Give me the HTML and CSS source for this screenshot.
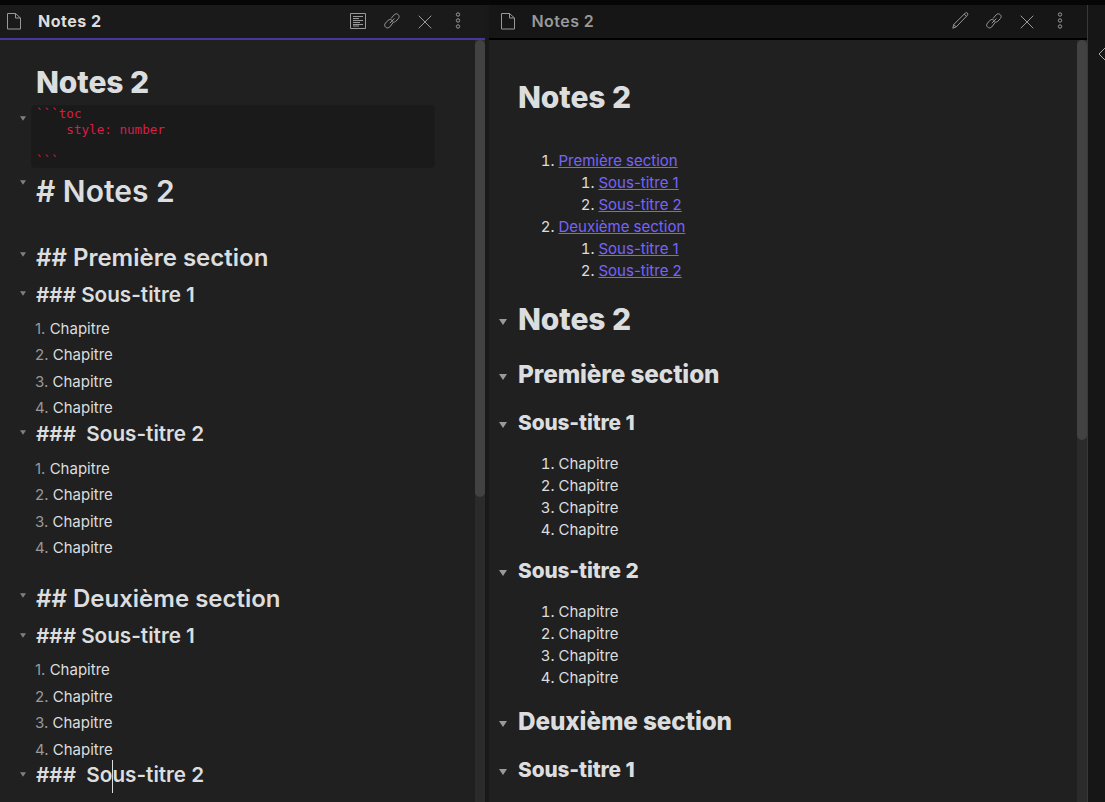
FILE: index.html
```html
<!DOCTYPE html>
<html lang="fr">
<head>
<meta charset="utf-8">
<title>Notes 2</title>
<link rel="stylesheet" href="styles.css">
</head>
<body>
<svg class="defs" width="0" height="0" aria-hidden="true">
  <symbol id="doc" viewBox="0 0 16 18"><path d="M1.5 1.5h8l5 4.5v11h-13zM9.5 1.5v4.5h5"/></symbol>
  <symbol id="link" viewBox="0 0 18 18"><path d="M8 6.5l3.2-3.7c1.2-1.3 2.900-1.200 4 -.2s1.200 2.700 .2 3.900l-2.700 2.900c-1.300 1.200-3 .9-4-.2M10 10.700l-3.200 4.200c-1.200 1.300-3 1.300-4.200 .3s-1.200-2.800-.1-4.100l2.700-2.900c1.300-1.100 3-.8 4 .3M6.800 11.200l4.600-4.700"/></symbol>
  <symbol id="close" viewBox="0 0 14 14"><path d="M.7.7l12.600 12.600M13.300.7L.7 13.300"/></symbol>
  <symbol id="more" viewBox="0 0 6 17"><circle cx="3" cy="2.500" r="1.700"/><circle cx="3" cy="8.500" r="1.700"/><circle cx="3" cy="14.500" r="1.700"/></symbol>
  <symbol id="lines" viewBox="0 0 16 16"><path d="M.5 .5h15v15H.5zM3 3.500h10M3 5.500h6M3 7.500h10M3 9.500h7M3 11.500h10M3 13h6"/></symbol>
  <symbol id="pencil" viewBox="0 0 17 17"><path d="M.8 16.200l1-3.700L13.200 1.100q1.300-1 2.200 0t0 2.200L4.200 14.900zM1.800 12.500l2.400 2.400M12.200 2.100l2.200 2.200"/></symbol>
  <symbol id="fold" viewBox="0 0 8 6"><path d="M0 0h8L4 6z"/></symbol>
</svg>
<div class="app">
  <main class="workspace">
    <section class="leaf editor active">
      <header class="bar">
        <svg class="icon doc"><use href="#doc"/></svg>
        <span class="name">Notes 2</span>
        <nav class="actions">
          <svg class="icon lines"><use href="#lines"/></svg>
          <svg class="icon link"><use href="#link"/></svg>
          <svg class="icon close"><use href="#close"/></svg>
          <svg class="icon more"><use href="#more"/></svg>
        </nav>
      </header>
      <div class="view">
        <div class="content">
          <div class="title">Notes 2</div>
          <div class="row code-row"><svg class="fold"><use href="#fold"/></svg><pre class="code">```toc
    style: number

```</pre></div>
          <div class="row h1"><svg class="fold"><use href="#fold"/></svg># Notes 2</div>
          <div class="row h2 first"><svg class="fold"><use href="#fold"/></svg>## Première section</div>
          <div class="row h3"><svg class="fold"><use href="#fold"/></svg>### Sous-titre 1</div>
          <div class="item"><i>1.</i> Chapitre</div>
          <div class="item"><i>2.</i> Chapitre</div>
          <div class="item"><i>3.</i> Chapitre</div>
          <div class="item"><i>4.</i> Chapitre</div>
          <div class="row h3 tight"><svg class="fold"><use href="#fold"/></svg>###  Sous-titre 2</div>
          <div class="item"><i>1.</i> Chapitre</div>
          <div class="item"><i>2.</i> Chapitre</div>
          <div class="item"><i>3.</i> Chapitre</div>
          <div class="item"><i>4.</i> Chapitre</div>
          <div class="row h2"><svg class="fold"><use href="#fold"/></svg>## Deuxième section</div>
          <div class="row h3"><svg class="fold"><use href="#fold"/></svg>### Sous-titre 1</div>
          <div class="item"><i>1.</i> Chapitre</div>
          <div class="item"><i>2.</i> Chapitre</div>
          <div class="item"><i>3.</i> Chapitre</div>
          <div class="item"><i>4.</i> Chapitre</div>
          <div class="row h3 tight"><svg class="fold"><use href="#fold"/></svg><span>###  So<b class="caret"></b>us-titre 2</span></div>
        </div>
        <div class="scroll"><div class="thumb"></div></div>
      </div>
    </section>
    <section class="leaf preview">
      <header class="bar">
        <svg class="icon doc"><use href="#doc"/></svg>
        <span class="name">Notes 2</span>
        <nav class="actions">
          <svg class="icon pencil"><use href="#pencil"/></svg>
          <svg class="icon link"><use href="#link"/></svg>
          <svg class="icon close"><use href="#close"/></svg>
          <svg class="icon more"><use href="#more"/></svg>
        </nav>
      </header>
      <div class="view">
        <div class="content">
          <div class="title">Notes 2</div>
          <ol class="toc">
            <li><a>Première section</a>
              <ol><li><a>Sous-titre 1</a></li><li><a>Sous-titre 2</a></li></ol></li>
            <li><a>Deuxième section</a>
              <ol><li><a>Sous-titre 1</a></li><li><a>Sous-titre 2</a></li></ol></li>
          </ol>
          <div class="row h1"><svg class="fold"><use href="#fold"/></svg>Notes 2</div>
          <div class="row h2"><svg class="fold"><use href="#fold"/></svg>Première section</div>
          <div class="row h3"><svg class="fold"><use href="#fold"/></svg>Sous-titre 1</div>
          <ol><li>Chapitre</li><li>Chapitre</li><li>Chapitre</li><li>Chapitre</li></ol>
          <div class="row h3"><svg class="fold"><use href="#fold"/></svg>Sous-titre 2</div>
          <ol><li>Chapitre</li><li>Chapitre</li><li>Chapitre</li><li>Chapitre</li></ol>
          <div class="row h2 second"><svg class="fold"><use href="#fold"/></svg>Deuxième section</div>
          <div class="row h3"><svg class="fold"><use href="#fold"/></svg>Sous-titre 1</div>
        </div>
        <div class="scroll"><div class="thumb"></div></div>
      </div>
    </section>
  </main>
  <aside class="side"><svg class="chevron" viewBox="0 0 7 14"><path d="M7 1L1 7l6 6"/></svg></aside>
</div>
</body>
</html>
```
FILE: styles.css
```css
* { box-sizing: border-box; }
body { margin: 0; background: #060606; color: #dcddde; font: 15px/22px Inter, sans-serif; overflow: hidden; }
.defs { display: block; height: 0; }
.app { display: flex; height: 802px; padding-top: 5px; }
.workspace { display: flex; gap: 4px; width: 1087px; background: #191919; }
.leaf { display: flex; flex-direction: column; background: #202020; }
.editor { width: 485px; }
.preview { width: 598px; }
.bar { display: flex; align-items: center; height: 35px; padding: 0 24px 2px 6px; background: #161616; border-bottom: 2px solid #000; color: #999; }
.active .bar { background: #1a1a1a; border-color: #483699; color: #dcddde; }
.bar .doc { width: 16px; height: 18px; }
.preview .bar .doc { margin-left: 5px; }
.name { margin-left: 16px; font-size: 16px; font-weight: 600; letter-spacing: .45px; }
.active .name { font-weight: 700; letter-spacing: .5px; }
.preview .name { margin-left: 15.500px; }
.actions { display: flex; align-items: center; margin-left: auto; }
.icon { fill: none; stroke: #999; stroke-width: 1; }
.lines { width: 16px; height: 16px; margin-right: 17px; }
.pencil { width: 17px; height: 17px; margin-right: 16px; }
.link { width: 18px; height: 18px; margin-right: 17px; }
.close { width: 14px; height: 14px; margin-right: 23px; margin-top: 2px; }
.more { width: 6px; height: 17px; }
.view { display: flex; flex: 1; min-height: 0; overflow: hidden; }
.content { flex: 1; min-width: 0; }
.scroll { width: 10px; background: #2b2b2b; }
.thumb { height: 457px; border-radius: 5px; background: #424242; }
.preview .thumb { height: 400px; }

.title { font-size: 30px; font-weight: 800; line-height: 36px; letter-spacing: -.1px; }
.row { display: flex; align-items: center; white-space: pre; }
.fold { flex: none; }

.editor .content { padding: 24px 0 0 20px; }
.editor .title { padding-left: 16px; }
.editor .row { font-weight: 600; }
.editor .fold { width: 6px; height: 5px; margin-right: 10px; fill: #808080; }
.editor .code-row { align-items: flex-start; margin-top: 5px; }
.code-row .fold { margin-top: 11px; margin-right: 5px; }
.code { width: 404px; height: 63px; margin: 0; padding: 0 4px; border: 1px solid #1b1b1b; border-radius: 4px; background: #1a1a1a; color: #d81e46; font: 12.600px/15.500px "DejaVu Sans Mono", monospace; }
.editor .h1 { height: 46px; font-size: 30px; margin-bottom: 29px; }
.editor .h1 .fold { margin-bottom: 17px; }
.editor .h2 { height: 30px; margin: 22.700px 0 9px; font-size: 24px; }
.editor .h2.first { margin: 0 0 8.500px; }
.editor .h2 .fold { margin-bottom: 8px; }
.editor .h3 { height: 26px; margin-bottom: 8px; font-size: 20.700px; }
.editor .h3.tight { margin: -1px 0 9px; }
.editor .h3 .fold { margin-bottom: 2px; }
.item { height: 26.500px; padding-left: 15px; line-height: 26.500px; }
.item i { color: #999; font-style: normal; }
.caret { position: absolute; width: 1px; height: 33px; margin: -4px 0 0 0; background: #dcddde; }

.preview .content { padding: 39px 0 0 10px; }
.preview .title { padding-left: 19px; }
.preview .row { font-weight: 800; letter-spacing: -.1px; }
.preview .fold { width: 8px; height: 6px; margin: 4px 11px 0 0; fill: #999; }
.preview ol { margin: 0; padding-left: 59.500px; }
.preview ol ol { padding-left: 40px; }
.preview .toc { margin-top: 35px; }
.toc a { color: #7864fa; text-decoration: underline; }
.preview .h1 { height: 36px; margin-top: 19px; font-size: 30px; }
.preview .h1 .fold { margin-top: 6px; }
.preview .h2 { height: 30px; margin: 22px 0 21px; font-size: 24.300px; }
.preview .h2 .fold { margin-top: 6px; }
.preview .h2.second { margin-top: 17px; }
.preview .h3 { height: 26px; margin: 17px 0; font-size: 20.800px; }
.preview .h3 .fold { margin-top: 3px; }

.side { flex: 1; border-left: 1px solid #383838; background: #161616; }
.chevron { display: block; width: 7px; height: 14px; margin: 42px 0 0 10px; fill: none; stroke: #aaa; }
```
